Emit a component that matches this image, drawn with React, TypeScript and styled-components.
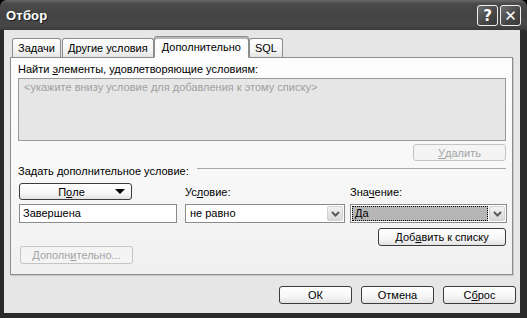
import styled, { createGlobalStyle } from 'styled-components';

const GlobalStyle = createGlobalStyle`
  html, body {
    margin: 0;
    padding: 0;
    overflow: hidden;
    background: #000;
  }
`;

const Window = styled.div`
  width: 527px;
  height: 318px;
  box-sizing: border-box;
  display: flex;
  flex-direction: column;
  background: #2a2a2a;
  border-radius: 7px 7px 0 0;
  overflow: hidden;
  font-family: 'Liberation Sans', Arial, sans-serif;
  font-size: 11px;
  color: #000;
`;

const TitleBar = styled.div`
  height: 30px;
  flex-shrink: 0;
  display: flex;
  align-items: center;
  padding: 0 6px 0 6px;
  background: linear-gradient(#6a6a6a 0%, #4a4a4a 12%, #434343 50%, #474747 85%, #3a3a3a 100%);
`;

const Title = styled.div`
  flex: 1;
  color: #fff;
  font-family: 'Liberation Sans', Arial, sans-serif;
  font-weight: bold;
  font-size: 13px;
  letter-spacing: 0.2px;
  text-shadow: 1px 1px 0 #222;
`;

const CaptionButton = styled.div`
  width: 19px;
  height: 19px;
  margin-left: 2px;
  margin-top: 1px;
  border: 1px solid #f0f0f0;
  border-radius: 3px;
  background: linear-gradient(135deg, #6e6e6e, #454545 60%, #3a3a3a);
  display: flex;
  align-items: center;
  justify-content: center;
  color: #fff;
  font-family: 'DejaVu Sans', sans-serif;
  font-weight: bold;
  font-size: 15px;
`;

const Client = styled.div`
  flex: 1;
  margin: 0 7px 5px 4px;
  background: #e6e6e6;
  padding: 5px 4px 0 6px;
  display: flex;
  flex-direction: column;
`;

const TabRow = styled.div`
  display: flex;
  align-items: flex-end;
  padding-left: 2px;
  height: 22px;
  position: relative;
  z-index: 1;
`;

const Tab = styled.div<{ $active?: boolean }>`
  height: ${({ $active }) => ($active ? '22px' : '19px')};
  box-sizing: border-box;
  padding: 0 ${({ $active }) => ($active ? '7px' : '5px')};
  margin-right: ${({ $active }) => ($active ? '0' : '1px')};
  margin-left: ${({ $active }) => ($active ? '-1px' : '0')};
  border: 1px solid #8c8c8c;
  border-bottom: ${({ $active }) => ($active ? '1px solid #fcfcfc' : 'none')};
  border-radius: 3px 3px 0 0;
  background: ${({ $active }) =>
    $active ? '#fcfcfc' : 'linear-gradient(#fefefe, #f2f2f2 70%, #e4e4e4)'};
  display: flex;
  align-items: center;
  margin-bottom: ${({ $active }) => ($active ? '-1px' : '0')};
  box-shadow: ${({ $active }) => ($active ? 'inset 0 2px 0 #b8b8b8' : 'none')};
`;

const Panel = styled.div`
  width: 503px;
  height: 218px;
  box-sizing: border-box;
  border: 1px solid #8c8c8c;
  background: linear-gradient(#fdfdfd, #f7f7f7 60%, #f0f0f0);
  padding: 4px 6px 0 7px;
  display: flex;
  flex-direction: column;
  box-shadow: 1px 1px 0 #c8c8c8;
`;

const Label = styled.div`
  height: 16px;
  line-height: 14px;
  white-space: nowrap;
`;

const ListBox = styled.div`
  height: 63px;
  box-sizing: border-box;
  border: 1px solid #9a9a9a;
  background: #e6e6e6;
  color: #a0a0a0;
  padding: 2px 5px;
`;

const RightRow = styled.div`
  display: flex;
  justify-content: flex-end;
  margin-top: 3px;
`;

const Button = styled.button<{ $w: number; $h?: number }>`
  width: ${({ $w }) => $w}px;
  height: ${({ $h }) => $h ?? 18}px;
  box-sizing: border-box;
  padding: 0;
  border: 1px solid #3c3c3c;
  border-radius: 3px;
  background: linear-gradient(#ffffff, #f6f6f6 60%, #e2e2e2);
  font-family: inherit;
  font-size: 11px;
  color: #000;
  display: flex;
  align-items: center;
  justify-content: center;

  &:disabled {
    border-color: #c4c4c4;
    background: #f4f4f4;
    color: #a3a3a3;
  }
`;

const SeparatorRow = styled.div`
  display: flex;
  align-items: center;
  margin-top: 3px;
  height: 14px;
`;

const Line = styled.div`
  flex: 1;
  align-self: flex-start;
  margin-top: 4px;
  height: 0;
  border-top: 1px solid #a8a8a8;
  margin-left: 8px;
`;

const Grid = styled.div<{ $gap: number }>`
  display: grid;
  grid-template-columns: 160px 159px 157px;
  column-gap: 6px;
  margin-top: ${({ $gap }) => $gap}px;
  margin-left: 1px;
`;

const Cell = styled.div`
  display: flex;
  align-items: center;
  height: 17px;
`;

const FieldButton = styled(Button)`
  position: relative;
  padding-right: 8px;
`;

const Arrow = styled.span`
  position: absolute;
  right: 6px;
  top: 5px;
  width: 0;
  height: 0;
  border-left: 5px solid transparent;
  border-right: 5px solid transparent;
  border-top: 5px solid #000;
`;

const TextBox = styled.div`
  width: 158px;
  height: 19px;
  box-sizing: border-box;
  border: 1px solid #8a8a8a;
  background: #fff;
  padding: 0 3px;
  line-height: 17px;
`;

const Combo = styled.div<{ $w: number }>`
  width: ${({ $w }) => $w}px;
  height: 19px;
  box-sizing: border-box;
  border: 1px solid #8a8a8a;
  background: #fff;
  display: flex;
  align-items: center;
  padding: 1px;
`;

const ComboText = styled.div<{ $selected?: boolean }>`
  flex: 1;
  height: 15px;
  box-sizing: border-box;
  line-height: 13px;
  padding: 0 2px;
  background: ${({ $selected }) => ($selected ? '#b6b6b6' : 'transparent')};
  border: 1px ${({ $selected }) => ($selected ? 'dotted #000' : 'solid transparent')};
  margin-right: 1px;
`;

const ComboArrow = styled.div`
  width: 16px;
  height: 15px;
  box-sizing: border-box;
  border-radius: 2px;
  background: linear-gradient(#f2f2f2, #d8d8d8);
  border: 1px solid #d0d0d0;
  display: flex;
  align-items: center;
  justify-content: center;
`;

const AddRow = styled.div`
  display: flex;
  justify-content: flex-end;
  margin-top: 5px;
  width: 488px;
`;

const MoreRow = styled.div`
  margin-left: 2px;
`;

const Footer = styled.div`
  display: flex;
  justify-content: flex-end;
  gap: 9px;
  margin-top: 11px;
`;

const Key = styled.span`
  text-decoration: underline;
`;

function Chevron() {
  return (
    <svg width="9" height="6" viewBox="0 0 9 6">
      <path d="M1 1l3.5 3.5L8 1" fill="none" stroke="#5a5a5a" strokeWidth="2" />
    </svg>
  );
}

export default function App() {
  return (
    <>
      <GlobalStyle />
      <Window>
        <TitleBar>
          <Title>Отбор</Title>
          <CaptionButton>?</CaptionButton>
          <CaptionButton>✕</CaptionButton>
        </TitleBar>
        <Client>
          <TabRow>
            <Tab>Задачи</Tab>
            <Tab>Другие условия</Tab>
            <Tab $active>Дополнительно</Tab>
            <Tab>SQL</Tab>
          </TabRow>
          <Panel>
            <Label>
              Найти <Key>э</Key>лементы, удовлетворяющие условиям:
            </Label>
            <ListBox>&lt;укажите внизу условие для добавления к этому списку&gt;</ListBox>
            <RightRow>
              <Button $w={93} $h={17} disabled>
                <Key>У</Key>далить
              </Button>
            </RightRow>
            <SeparatorRow>
              <span>Задать дополнительное условие:</span>
              <Line />
            </SeparatorRow>
            <Grid $gap={5}>
              <Cell>
                <FieldButton $w={113} $h={17}>
                  П<Key>о</Key>ле
                  <Arrow />
                </FieldButton>
              </Cell>
              <Cell>
                Ус<Key>л</Key>овие:
              </Cell>
              <Cell>
                Зна<Key>ч</Key>ение:
              </Cell>
            </Grid>
            <Grid $gap={4}>
              <TextBox>Завершена</TextBox>
              <Combo $w={160}>
                <ComboText>не равно</ComboText>
                <ComboArrow>
                  <Chevron />
                </ComboArrow>
              </Combo>
              <Combo $w={157}>
                <ComboText $selected>Да</ComboText>
                <ComboArrow>
                  <Chevron />
                </ComboArrow>
              </Combo>
            </Grid>
            <AddRow>
              <Button $w={128}>
                Доб<Key>а</Key>вить к списку
              </Button>
            </AddRow>
            <MoreRow>
              <Button $w={113} disabled>
                Дополн<Key>и</Key>тельно...
              </Button>
            </MoreRow>
          </Panel>
          <Footer>
            <Button $w={73}>ОК</Button>
            <Button $w={73}>Отмена</Button>
            <Button $w={73}>
              С<Key>б</Key>рос
            </Button>
          </Footer>
        </Client>
      </Window>
    </>
  );
}
